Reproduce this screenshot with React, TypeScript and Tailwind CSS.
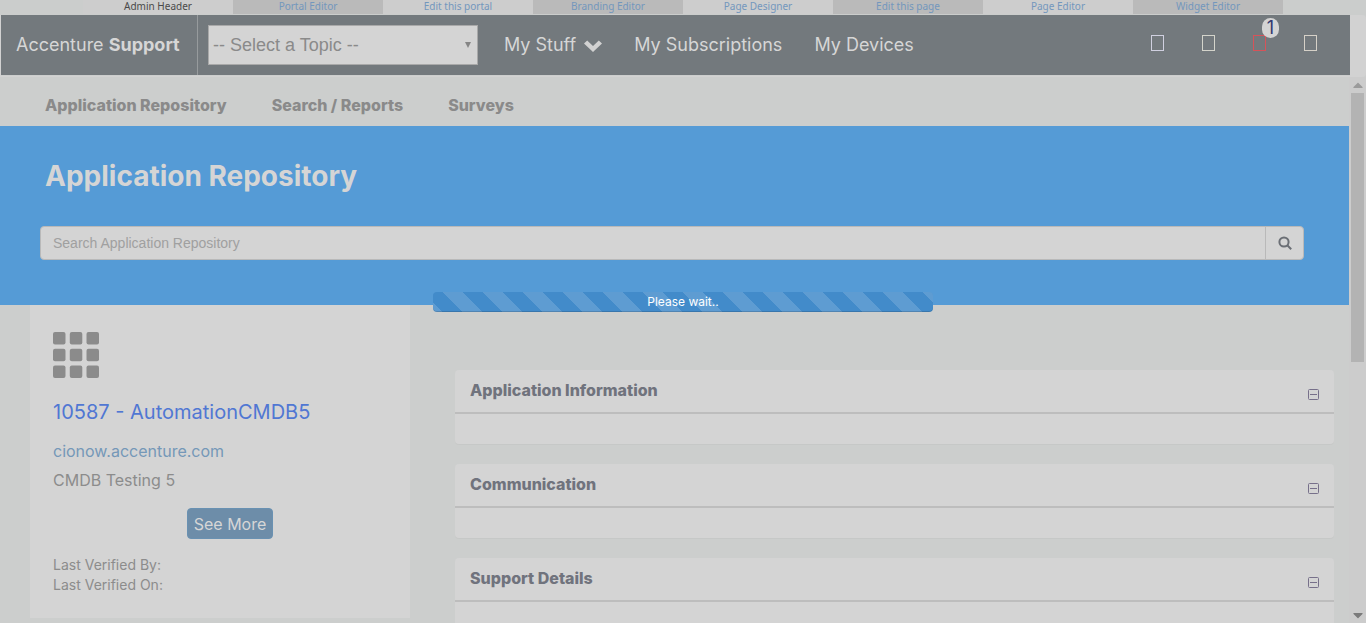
import { Fragment } from "react";
import type { ReactNode } from "react";
import { FaCaretDown, FaCaretUp } from "react-icons/fa";

const adminLinks = [
  "Portal Editor",
  "Edit this portal",
  "Branding Editor",
  "Page Designer",
  "Edit this page",
  "Page Editor",
  "Widget Editor",
];

const panels = ["Application Information", "Communication", "Support Details"];

function AdminBar() {
  return (
    <nav
      aria-label="Admin"
      className="flex h-[15px] shrink-0 justify-center bg-[#cbcdcc] font-['Noto_Sans',sans-serif] text-[10px] leading-[13px]"
    >
      <span className="h-3.5 w-[150px] bg-[#cdcdcd] text-center text-[#4a4a4a]">Admin Header</span>
      {adminLinks.map((label, i) => (
        <a
          key={label}
          href="#"
          className={`h-3.5 w-[150px] text-center text-[#7397bd] ${i % 2 === 0 ? "bg-[#bababa]" : "bg-[#cdcdcd]"}`}
        >
          {label}
        </a>
      ))}
    </nav>
  );
}

function GlyphButton({ label, tone, children }: { label: string; tone: string; children?: ReactNode }) {
  return (
    <button type="button" aria-label={label} className="relative h-4 w-[13px]">
      <span className={`block h-4 w-[13px] border ${tone}`} />
      {children}
    </button>
  );
}

function Header() {
  return (
    <header className="flex h-[62px] shrink-0 rounded-r bg-[#d2d2d2] pl-px">
      <div className="flex h-[61px] flex-1 flex-col bg-[#cccecd]">
        <div className="flex h-[60px] items-center bg-[#73797d] text-lg text-[#d6d6d6]">
          <a href="#" className="flex h-full w-[197px] items-center border-r border-[#979b9d] pl-[15px] whitespace-nowrap">
            <span>
              Accenture <b className="font-bold">Support</b>
            </span>
          </a>
          <div className="relative ml-2.5 w-[270px]">
            <select
              aria-label="Select a Topic"
              className="h-10 w-full appearance-none border border-[#a9a9a9] bg-[#d4d4d4] pl-1 font-['Liberation_Sans',sans-serif] text-lg text-[#8a8a8a]"
            >
              <option>-- Select a Topic --</option>
            </select>
            <svg viewBox="0 0 6 6" className="pointer-events-none absolute top-[17px] right-[7px] h-1.5 w-1.5" fill="#858585">
              <path d="M0 0h6L3 6z" />
            </svg>
          </div>
          <nav className="ml-[26px] flex gap-8 whitespace-nowrap">
            <a href="#" className="flex items-center gap-2">
              My Stuff
              <svg viewBox="0 0 18 12" className="mt-0.5 h-3 w-[18px]" fill="#d2d2d2">
                <path d="M3.200.4 9 6l5.800-5.600L18 3.500 9 12 0 3.500z" />
              </svg>
            </a>
            <a href="#">My Subscriptions</a>
            <a href="#">My Devices</a>
          </nav>
          <div className="mr-[33px] mb-1 ml-auto flex gap-[38px]">
            <GlyphButton label="Home" tone="border-[#d0d0e0]" />
            <GlyphButton label="Help" tone="border-[#d4d4cb]" />
            <GlyphButton label="Notifications" tone="border-[#d65359]">
              <span className="absolute -top-[17px] left-[9px] h-5 w-[17px] rounded-full bg-[#d4d4d4] text-center text-lg leading-5 text-[#343a70]">
                1
              </span>
            </GlyphButton>
            <GlyphButton label="Profile" tone="border-[#d6d1c8]" />
          </div>
        </div>
      </div>
      <div className="w-4" />
    </header>
  );
}

function Hero() {
  return (
    <section className="h-[179px] bg-[#559bd6] pr-[45px] pl-10">
      <h1 className="pt-8 pl-[5px] text-[28px] leading-9 font-bold text-[#d5d5d5]">Application Repository</h1>
      <form className="mt-8 flex h-[34px] rounded border border-[#b9b9b9] bg-[#d4d4d4]">
        <input
          type="text"
          aria-label="Search Application Repository"
          placeholder="Search Application Repository"
          className="min-w-0 flex-1 px-3 font-['Liberation_Sans',sans-serif] text-sm placeholder:text-[#a0a0a0]"
        />
        <button type="button" aria-label="Search" className="flex w-[38px] items-center justify-center border-l border-[#b9b9b9]">
          <svg viewBox="0 0 14 14" className="h-3.5 w-3.5" fill="none" stroke="#6b6f75" strokeWidth="2">
            <circle cx="6" cy="6" r="4.600" />
            <path d="m9.300 9.300 3.900 3.900" />
          </svg>
        </button>
      </form>
    </section>
  );
}

function AppCard() {
  return (
    <article className="ml-[30px] h-[313px] w-[380px] shrink-0 bg-[#d4d4d4] px-[23px] pt-[27px] text-[#8c8c8c]">
      <svg viewBox="0 0 46 46" className="h-[46px] w-[46px]" fill="#8b8b8b">
        {[0, 16.8, 33.5].map((y) => (
          <Fragment key={y}>
            {[0, 16.8, 33.5].map((x) => (
              <rect key={x} x={x} y={y} width="12.500" height="12.500" rx="2" />
            ))}
          </Fragment>
        ))}
      </svg>
      <h2 className="mt-5 text-xl leading-7 text-[#5077d3]">10587 - AutomationCMDB5</h2>
      <a href="#" className="mt-[13px] block text-base leading-6 text-[#7598b8]">
        cionow.accenture.com
      </a>
      <p className="mt-[5px] text-base leading-6">CMDB Testing 5</p>
      <div className="mt-4 flex justify-center pl-5">
        <button type="button" className="h-[31px] rounded border border-[#6991b2] bg-[#6d8da9] px-1.5 text-base leading-7 text-[#d6d6d6]">
          See More
        </button>
      </div>
      <p className="mt-4 text-sm leading-5">Last Verified By:</p>
      <p className="text-sm leading-5">Last Verified On:</p>
    </article>
  );
}

function Panel({ title }: { title: string }) {
  return (
    <section className="h-[74px] shrink-0 rounded bg-[#d4d4d4] shadow-[0_1px_1px_rgba(0,0,0,0.03)]">
      <div className="flex h-11 items-center justify-between border-b-2 border-[#bdbdbd] pr-[15px] pl-[15px]">
        <h3 className="pb-0.5 text-base leading-6 font-extrabold text-[#70737d]">{title}</h3>
        <button type="button" aria-label={`Collapse ${title}`} className="mt-1.5">
          <svg viewBox="0 0 11 11" className="h-[11px] w-[11px]" fill="none" stroke="#77708a">
            <rect x="0.500" y="0.500" width="10" height="10" rx="1" />
            <path d="M2 5.500h7" />
          </svg>
        </button>
      </div>
    </section>
  );
}

export default function App() {
  return (
    <div className="relative flex h-screen flex-col overflow-hidden bg-[#cccecd] font-['Inter',sans-serif]">
      <AdminBar />
      <Header />
      <div className="flex min-h-0 flex-1">
        <main className="min-w-0 flex-1 overflow-hidden">
          <nav className="flex h-[49px] items-center gap-[45px] pt-1.5 pl-[45px] text-base font-extrabold text-[#8a8a8a]">
            <a href="#">Application Repository</a>
            <a href="#">Search / Reports</a>
            <a href="#">Surveys</a>
          </nav>
          <Hero />
          <div className="flex">
            <AppCard />
            <div className="mr-[15px] ml-[45px] flex flex-1 flex-col gap-5 pt-[65px]">
              {panels.map((title) => (
                <Panel key={title} title={title} />
              ))}
            </div>
          </div>
        </main>
        <div aria-hidden="true" className="flex w-[17px] flex-col items-center bg-[#cccccc] text-[#9b9b9b]">
          <FaCaretUp className="h-4 w-3 shrink-0" />
          <div className="h-[269px] w-[13px] bg-[#b3b3b3]" />
          <FaCaretDown className="mt-auto h-4 w-3 shrink-0 text-[#7b7b7b]" />
        </div>
      </div>
      <div
        role="status"
        className="absolute top-[292px] left-1/2 h-5 w-[500px] -translate-x-1/2 rounded bg-[#428bca] bg-[linear-gradient(45deg,rgba(255,255,255,0.15)_25%,transparent_25%,transparent_50%,rgba(255,255,255,0.15)_50%,rgba(255,255,255,0.15)_75%,transparent_75%,transparent)] bg-size-[40px_40px] bg-position-[10px_0] text-center text-xs leading-5 text-white shadow-[inset_0_-1px_0_rgba(0,0,0,0.15)]"
      >
        Please wait..
      </div>
    </div>
  );
}
